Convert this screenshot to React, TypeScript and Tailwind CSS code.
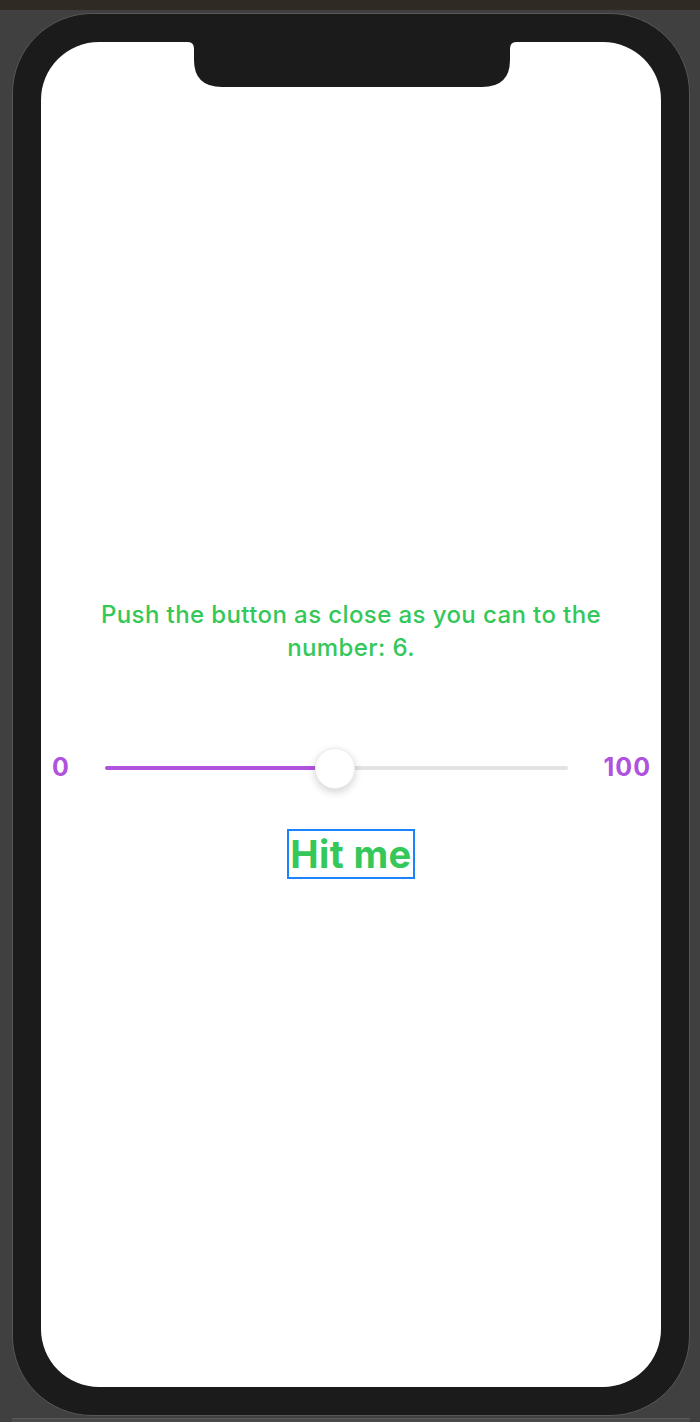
import React, { useState } from "react";

const Notch = () => (
  <svg
    className="absolute top-0 left-[147px]"
    width="328"
    height="46"
    viewBox="0 0 328 46"
  >
    <path
      d="M0 0 H328 Q322 0 322 7 V18 Q322 45 294 45 H34 Q6 45 6 18 V7 Q6 0 0 0 Z"
      fill="#1b1b1b"
    />
  </svg>
);

const App = () => {
  const [value] = useState(50);
  const target = 6;

  return (
    <div
      className="w-[700px] h-[1422px] flex flex-col bg-[#404040]"
      style={{ fontFamily: "Inter, 'Noto Sans', sans-serif" }}
    >
      <div className="h-[10px] bg-[#302a25]" />
      <div className="flex-1 pt-[3px] pl-[12px] pr-[10px] flex flex-col">
        <div className="h-[1403px] rounded-[80px] border border-[#575757] bg-[#1b1b1b] p-[28px] flex">
          <div className="relative flex-1 bg-white rounded-[58px] flex flex-col items-center">
            <Notch />
            <p className="mt-[556px] px-[40px] text-center text-[24px] leading-[33px] font-medium tracking-[0.4px] text-[#34c759]">
              {`Push the button as close as you can to the number: ${target}.`}
            </p>
            <div className="mt-[91px] w-full flex items-center pl-[11px] pr-[10px]">
              <span className="text-[25px] font-bold text-[#af52de] leading-none">
                0
              </span>
              <div className="relative flex-1 mx-[36px] h-[4px] rounded-full bg-[#e3e3e3]">
                <div
                  className="absolute left-0 top-0 h-full rounded-full bg-[#af52de]"
                  style={{ width: `${value}%` }}
                />
                <div
                  className="absolute top-[-18px] ml-[-21px] w-[40px] h-[41px] rounded-full bg-white border border-[#ececec] shadow-[0_3px_8px_rgba(0,0,0,0.18)]"
                  style={{ left: `${value}%` }}
                />
              </div>
              <span className="text-[25px] font-bold tracking-[1px] text-[#af52de] leading-none">
                100
              </span>
            </div>
            <button className="mt-[49px] border-2 border-[#1a84ff] px-[1px] text-[38px] leading-[46px] font-bold text-[#34c759] tracking-[0.4px]">
              Hit me
            </button>
          </div>
        </div>
        <div className="mt-[2px] h-[1px] bg-[#5a5a5a]" />
        <div className="flex-1 bg-[#4a4a4a]" />
      </div>
    </div>
  );
};

export default App;
